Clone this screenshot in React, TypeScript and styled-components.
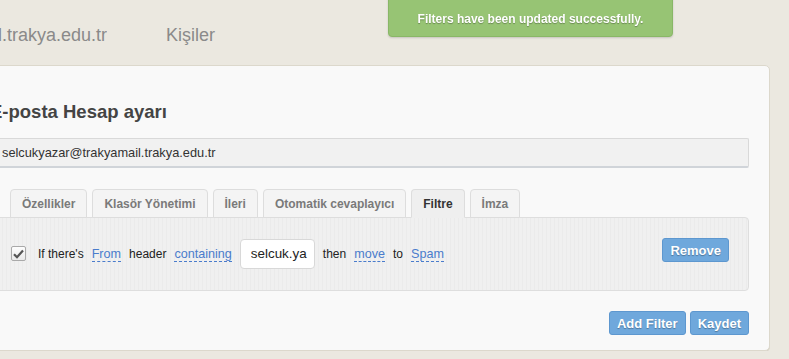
import styled, { createGlobalStyle } from 'styled-components';

const GlobalStyle = createGlobalStyle`
  html, body {
    margin: 0;
    padding: 0;
    background: #ebe8e0;
    overflow: hidden;
  }
  body {
    font-family: "Liberation Sans", Arial, sans-serif;
    color: #333;
  }
`;

const tabs = ['Özellikler', 'Klasör Yönetimi', 'İleri', 'Otomatik cevaplayıcı', 'Filtre', 'İmza'];

export default function App() {
  return (
    <>
      <GlobalStyle />
      <Page>
        <TopBar>
          <BrandBox>
            <NavLink>trakyamail.trakya.edu.tr</NavLink>
          </BrandBox>
          <NavLink style={{ marginLeft: 59 }}>Kişiler</NavLink>
        </TopBar>

        <Panel>
          <Heading>E-posta Hesap ayarı</Heading>
          <AccountBar>selcukyazar@trakyamail.trakya.edu.tr</AccountBar>

          <TabList>
            {tabs.map((t) => (
              <Tab key={t} $active={t === 'Filtre'}>
                {t}
              </Tab>
            ))}
          </TabList>

          <FilterBox>
            <RuleRow>
              <Check>
                <svg width="11" height="10" viewBox="0 0 11 10">
                  <path d="M1 5.2 L4 8.2 L10 1.5" fill="none" stroke="#555" strokeWidth="2.2" />
                </svg>
              </Check>
              <Word>If there's</Word>
              <Pick>From</Pick>
              <Word>header</Word>
              <Pick>containing</Pick>
              <ValueInput readOnly value="selcuk.ya" />
              <Word>then</Word>
              <Pick>move</Pick>
              <Word>to</Word>
              <Pick>Spam</Pick>
            </RuleRow>
            <BlueButton>Remove</BlueButton>
          </FilterBox>

          <Actions>
            <BlueButton>Add Filter</BlueButton>
            <BlueButton>Kaydet</BlueButton>
          </Actions>
        </Panel>
      </Page>
      <Notice>Filters have been updated successfully.</Notice>
    </>
  );
}

const Page = styled.div`
  margin-left: -31px;
  width: 820px;
  display: flex;
  flex-direction: column;
`;

const TopBar = styled.div`
  height: 65px;
  display: flex;
  align-items: center;
  padding-top: 5px;
  box-sizing: border-box;
`;

const BrandBox = styled.div`
  width: 138px;
  display: flex;
  justify-content: flex-end;
  overflow: hidden;
`;

const NavLink = styled.span`
  font-size: 18px;
  color: #8a8a8a;
  white-space: nowrap;
`;

const Notice = styled.div`
  position: fixed;
  top: -6px;
  left: 388px;
  width: 285px;
  height: 43px;
  box-sizing: border-box;
  padding-top: 17px;
  background: #97c474;
  border: 1px solid #89b767;
  border-radius: 4px;
  box-shadow: 0 1px 2px rgba(0, 0, 0, 0.15);
  color: #fff;
  font-size: 12px;
  font-weight: bold;
  text-align: center;
  text-shadow: 0 1px 1px rgba(0, 0, 0, 0.3);
`;

const Panel = styled.div`
  margin-right: 19px;
  background: #f9f9f9;
  border: 1px solid #dcd8cc;
  border-radius: 5px;
  box-shadow: 0 1px 0 #d8d4c8;
  padding: 35px 20px 15px 20px;
  display: flex;
  flex-direction: column;
`;

const Heading = styled.h2`
  margin: 0;
  font-size: 18.5px;
  line-height: 22px;
  font-weight: bold;
  color: #444;
`;

const AccountBar = styled.div`
  margin-top: 15px;
  height: 30px;
  box-sizing: border-box;
  display: flex;
  align-items: center;
  padding-left: 11px;
  background: #f1f1f1;
  border: 1px solid #d9d9d9;
  border-bottom: 2px solid #d0d4d9;
  border-radius: 2px;
  font-size: 12.8px;
  color: #333;
`;

const TabList = styled.div`
  margin-top: 21px;
  padding-left: 20px;
  display: flex;
  gap: 5px;
  position: relative;
  z-index: 1;
  margin-bottom: -1px;
`;

const Tab = styled.div<{ $active?: boolean }>`
  height: 29px;
  box-sizing: border-box;
  padding: 0 11px;
  display: flex;
  align-items: center;
  font-size: 12px;
  font-weight: bold;
  color: ${(p) => (p.$active ? '#333' : '#7a7a7a')};
  background: ${(p) => (p.$active ? '#efefef' : '#f4f4f4')};
  border: 1px solid #ddd;
  border-bottom-color: ${(p) => (p.$active ? '#efefef' : '#ddd')};
  border-radius: 4px 4px 0 0;
`;

const FilterBox = styled.div`
  display: flex;
  justify-content: space-between;
  align-items: flex-start;
  padding: 20px 19px 21px 20px;
  background: repeating-linear-gradient(90deg, #f0f0f0 0 3px, #ebebeb 3px 4px);
  border: 1px solid #dedede;
  border-radius: 0 4px 4px 4px;
`;

const RuleRow = styled.div`
  display: flex;
  align-items: center;
  height: 31px;
  font-size: 12px;
  color: #222;
`;

const Check = styled.span`
  width: 15px;
  height: 15px;
  box-sizing: border-box;
  border: 1px solid #a9a9a9;
  border-radius: 2px;
  background: linear-gradient(#fdfdfd, #e9e9e9);
  display: flex;
  align-items: center;
  justify-content: center;
  margin-right: 12px;
`;

const Word = styled.span`
  margin-right: 8px;
  white-space: nowrap;
`;

const Pick = styled.span`
  margin-right: 8px;
  font-size: 12.6px;
  color: #4a7ccc;
  border-bottom: 1px dashed #4a7ccc;
  line-height: 14px;
  padding-top: 2px;
  white-space: nowrap;
`;

const ValueInput = styled.input`
  width: 75px;
  height: 30px;
  box-sizing: border-box;
  margin: 0 8px 0 0;
  padding: 0 4px 0 10px;
  border: 1px solid #d8d8d8;
  border-radius: 4px;
  background: #fff;
  font-family: "Liberation Sans", Arial, sans-serif;
  font-size: 13.4px;
  color: #222;
  outline: none;
`;

const BlueButton = styled.button`
  height: 24px;
  padding: 0 7px;
  margin: 0;
  background: #6fa8dc;
  border: 1px solid #5d97cf;
  border-radius: 3px;
  color: #fff;
  font-family: "Liberation Sans", Arial, sans-serif;
  font-size: 13px;
  font-weight: bold;
  text-shadow: 0 1px 1px rgba(0, 0, 0, 0.3);
  cursor: pointer;
`;

const Actions = styled.div`
  margin-top: 20px;
  display: flex;
  justify-content: flex-end;
  gap: 4px;
`;
